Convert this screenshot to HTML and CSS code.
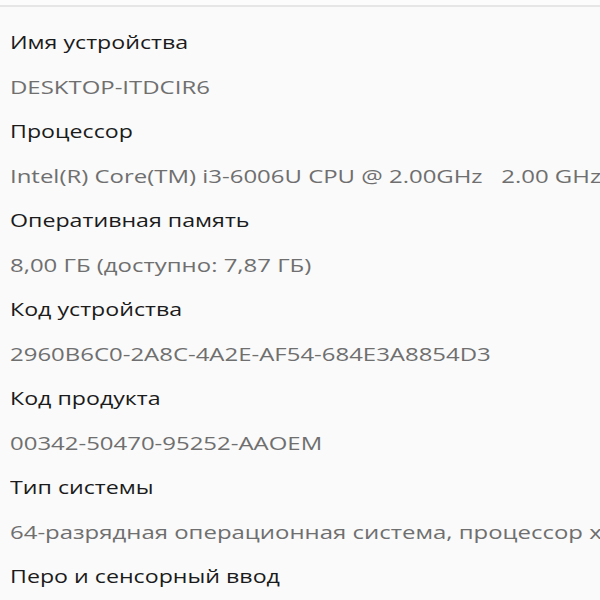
FILE: index.html
```html
<!DOCTYPE html>
<html lang="ru">
<head>
    <meta charset="UTF-8">
    <title>Характеристики устройства</title>
    <link rel="stylesheet" href="styles.css">
</head>
<body>
    <div class="top-edge"></div>

    <!-- Device specs -->
    <div class="specs">
        <div class="label">Имя устройства</div>
        <div class="value">DESKTOP-ITDCIR6</div>

        <div class="label">Процессор</div>
        <div class="value">Intel(R) Core(TM) i3-6006U CPU @ 2.00GHz&nbsp;&nbsp;&nbsp;2.00 GHz</div>

        <div class="label">Оперативная память</div>
        <div class="value">8,00 ГБ (доступно: 7,87 ГБ)</div>

        <div class="label">Код устройства</div>
        <div class="value">2960B6C0-2A8C-4A2E-AF54-684E3A8854D3</div>

        <div class="label">Код продукта</div>
        <div class="value">00342-50470-95252-AAOEM</div>

        <div class="label">Тип системы</div>
        <div class="value">64-разрядная операционная система, процессор x64</div>

        <div class="label">Перо и сенсорный ввод</div>
    </div>
</body>
</html>
```
FILE: styles.css
```css
body {
    font-family: "Open Sans", "Noto Sans", sans-serif;
    margin: 0;
    padding: 0;
    background-color: #fafafa;
    overflow: hidden;
}
.top-edge {
    height: 5px;
    background-color: #fcfcfc;
    border-bottom: 2px solid #e6e6e6;
}
.specs {
    padding: 13px 0 0 10px;
    white-space: nowrap;
}
.label,
.value {
    height: 44.5px;
    line-height: 44.5px;
    font-size: 19px;
    transform-origin: left center;
}
.label {
    color: #1b1b1b;
    transform: scaleX(1.22);
}
.value {
    color: #6f6f6f;
    transform: scaleX(1.26);
}
```
